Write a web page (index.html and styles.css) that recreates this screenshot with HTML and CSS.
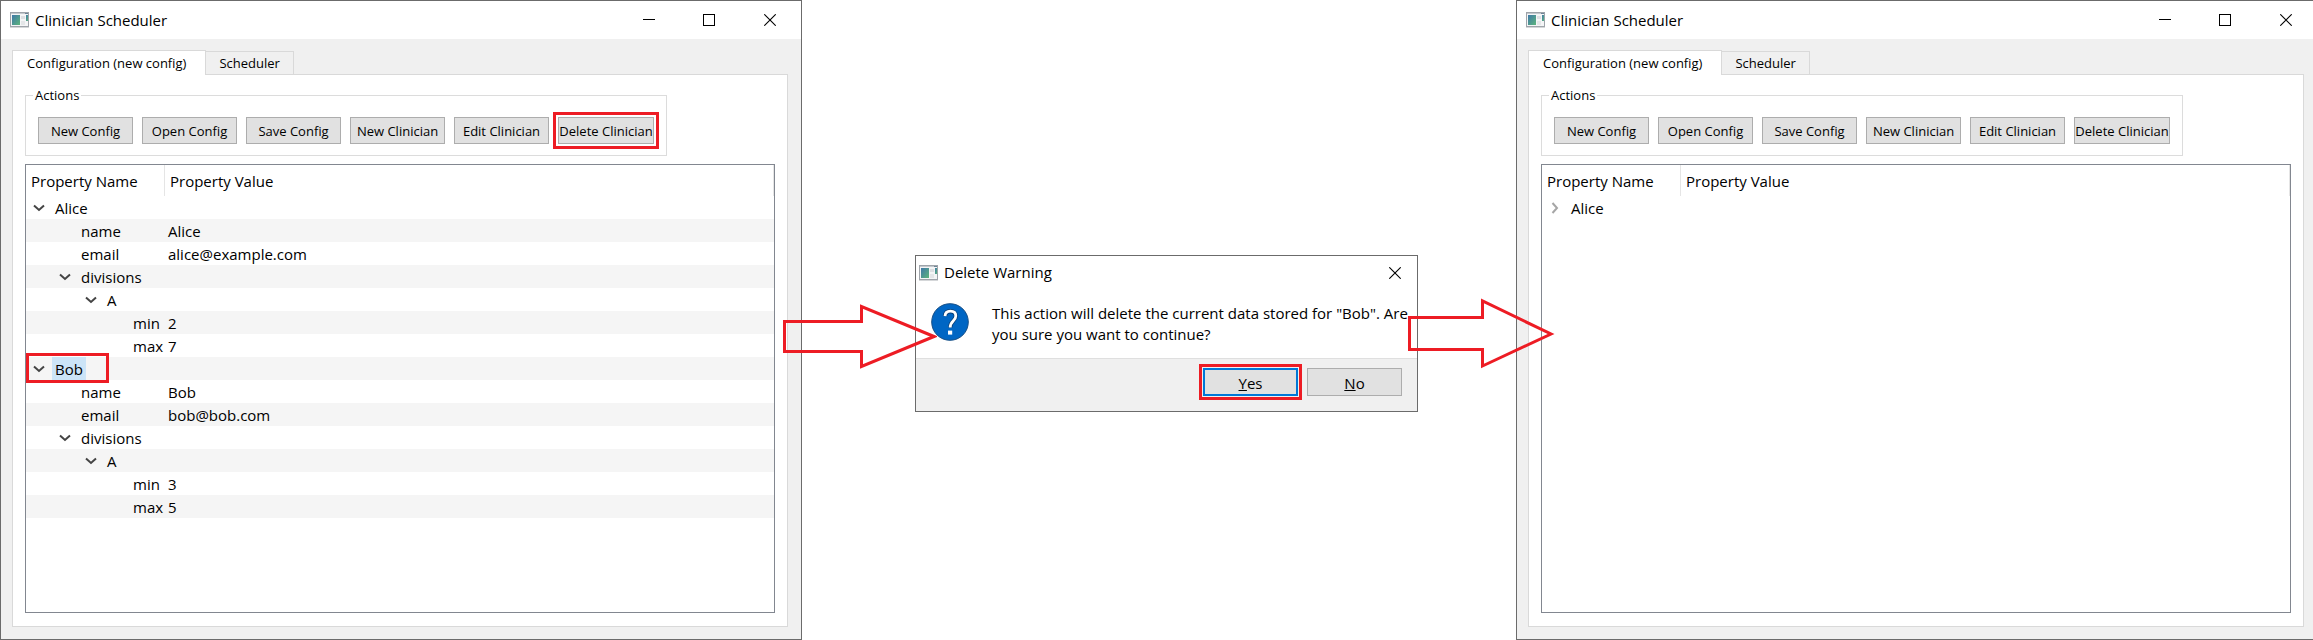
FILE: index.html
```html
<!DOCTYPE html>
<html lang="en">
<head>
<meta charset="utf-8">
<title>Clinician Scheduler</title>
<link rel="stylesheet" href="styles.css">
</head>
<body>
<svg class="defs" aria-hidden="true">
  <defs>
    <linearGradient id="screen" x1="0" y1="0" x2="1" y2="1">
      <stop offset="0" stop-color="#3f78a8"/><stop offset="1" stop-color="#5db57c"/>
    </linearGradient>
    <symbol id="app" viewBox="0 0 19 16">
      <rect x="0.5" y="0.5" width="18" height="14" fill="#f4f5f6" stroke="#9fa4aa"/>
      <path d="M0 15.5H19" stroke="#d5d7d9"/>
      <path d="M1 1.5H15" stroke="#c3c8cd"/>
      <path d="M15 1.5H18" stroke="#6d8597"/>
      <rect x="2" y="3" width="8" height="10" fill="url(#screen)"/>
      <rect x="11" y="4" width="4" height="3" fill="#dddfe2"/>
      <rect x="11" y="9" width="4" height="4" fill="#e4e6e8"/>
      <rect x="16" y="3" width="2" height="6" fill="url(#screen)"/>
    </symbol>
    <symbol id="min" viewBox="0 0 12 12"><path d="M0 5.5H12" stroke="#000"/></symbol>
    <symbol id="max" viewBox="0 0 12 12"><rect x="0.5" y="0.5" width="11" height="11" fill="none" stroke="#000"/></symbol>
    <symbol id="close" viewBox="0 0 12 12"><path d="M0.3 0.3L11.7 11.7M11.7 0.3L0.3 11.7" stroke="#000" stroke-width="1.1"/></symbol>
    <symbol id="open" viewBox="0 0 12 12"><path d="M1 3.5L6 8L11 3.5" fill="none" stroke="#444" stroke-width="2"/></symbol>
    <symbol id="shut" viewBox="0 0 12 12"><path d="M3.5 1L8 6L3.5 11" fill="none" stroke="#a6a6a6" stroke-width="2"/></symbol>
  </defs>
</svg>
<main class="stage">
  <section class="window">
    <header class="titlebar">
      <svg class="app-icon"><use href="#app"/></svg>
      <h1 class="title">Clinician Scheduler</h1>
      <button class="caption" aria-label="Minimize"><svg><use href="#min"/></svg></button>
      <button class="caption" aria-label="Maximize"><svg><use href="#max"/></svg></button>
      <button class="caption" aria-label="Close"><svg><use href="#close"/></svg></button>
    </header>
    <div class="client">
      <div class="tabs" role="tablist">
        <button class="tab active" role="tab" aria-selected="true">Configuration (new config)</button>
        <button class="tab" role="tab" aria-selected="false">Scheduler</button>
      </div>
      <div class="panel">
        <fieldset class="actions">
          <legend>Actions</legend>
          <button class="btn">New Config</button>
          <button class="btn">Open Config</button>
          <button class="btn">Save Config</button>
          <button class="btn">New Clinician</button>
          <button class="btn">Edit Clinician</button>
          <button class="btn marked">Delete Clinician</button>
        </fieldset>
        <div class="tree">
          <table>
            <thead><tr><th class="name-col">Property Name</th><th>Property Value</th></tr></thead>
            <tbody>
              <tr><td><div class="node l0"><svg><use href="#open"/></svg><span>Alice</span></div></td><td></td></tr>
              <tr><td><div class="node l2"><span>name</span></div></td><td>Alice</td></tr>
              <tr><td><div class="node l2"><span>email</span></div></td><td>alice@example.com</td></tr>
              <tr><td><div class="node l1"><svg><use href="#open"/></svg><span>divisions</span></div></td><td></td></tr>
              <tr><td><div class="node l2"><svg><use href="#open"/></svg><span>A</span></div></td><td></td></tr>
              <tr><td><div class="node l4"><span>min</span></div></td><td>2</td></tr>
              <tr><td><div class="node l4"><span>max</span></div></td><td>7</td></tr>
              <tr><td><div class="node l0 picked"><svg><use href="#open"/></svg><span>Bob</span></div></td><td></td></tr>
              <tr><td><div class="node l2"><span>name</span></div></td><td>Bob</td></tr>
              <tr><td><div class="node l2"><span>email</span></div></td><td>bob@bob.com</td></tr>
              <tr><td><div class="node l1"><svg><use href="#open"/></svg><span>divisions</span></div></td><td></td></tr>
              <tr><td><div class="node l2"><svg><use href="#open"/></svg><span>A</span></div></td><td></td></tr>
              <tr><td><div class="node l4"><span>min</span></div></td><td>3</td></tr>
              <tr><td><div class="node l4"><span>max</span></div></td><td>5</td></tr>
            </tbody>
          </table>
        </div>
      </div>
    </div>
  </section>

  <section class="between">
    <div class="dialog" role="dialog" aria-labelledby="dialog-title">
      <header class="dialog-bar">
        <svg class="app-icon"><use href="#app"/></svg>
        <h2 class="title" id="dialog-title">Delete Warning</h2>
        <button class="caption" aria-label="Close"><svg><use href="#close"/></svg></button>
      </header>
      <div class="message">
        <svg class="question" viewBox="0 0 38 38" aria-hidden="true">
          <circle cx="19" cy="19" r="18.3" fill="#0066c4" stroke="#174f86"/>
          <path d="M14 13.2C14.2 9.8 16.3 8.2 19.4 8.2C22.8 8.2 24.8 10.2 24.8 13C24.8 18 19.2 17.6 19.2 24.6" fill="none" stroke="#0a3f75" stroke-width="4.4"/>
          <path d="M14 13.2C14.2 9.8 16.3 8.2 19.4 8.2C22.8 8.2 24.8 10.2 24.8 13C24.8 18 19.2 17.6 19.2 24.6" fill="none" stroke="#fff" stroke-width="2.8"/>
          <rect x="17" y="27.6" width="4.2" height="4" fill="#fff"/>
        </svg>
        <p>This action will delete the current data stored for "Bob". Are you sure you want to continue?</p>
      </div>
      <footer class="choices">
        <button class="btn choice default marked"><u>Y</u>es</button>
        <button class="btn choice"><u>N</u>o</button>
      </footer>
    </div>
    <svg class="arrow first" viewBox="0 0 154 66" aria-hidden="true"><path d="M1.5 17.5H78.5V2.5L151 32.5L78.5 62.5V47.5H1.5Z"/></svg>
    <svg class="arrow second" viewBox="0 0 147 72" aria-hidden="true"><path d="M1.5 19.5H74.5V3L143 36L74.5 68V51.5H1.5Z"/></svg>
  </section>

  <section class="window cut">
    <header class="titlebar">
      <svg class="app-icon"><use href="#app"/></svg>
      <h1 class="title">Clinician Scheduler</h1>
      <button class="caption" aria-label="Minimize"><svg><use href="#min"/></svg></button>
      <button class="caption" aria-label="Maximize"><svg><use href="#max"/></svg></button>
      <button class="caption" aria-label="Close"><svg><use href="#close"/></svg></button>
    </header>
    <div class="client">
      <div class="tabs" role="tablist">
        <button class="tab active" role="tab" aria-selected="true">Configuration (new config)</button>
        <button class="tab" role="tab" aria-selected="false">Scheduler</button>
      </div>
      <div class="panel">
        <fieldset class="actions">
          <legend>Actions</legend>
          <button class="btn">New Config</button>
          <button class="btn">Open Config</button>
          <button class="btn">Save Config</button>
          <button class="btn">New Clinician</button>
          <button class="btn">Edit Clinician</button>
          <button class="btn">Delete Clinician</button>
        </fieldset>
        <div class="tree">
          <table>
            <thead><tr><th class="name-col">Property Name</th><th>Property Value</th></tr></thead>
            <tbody>
              <tr><td><div class="node l0"><svg><use href="#shut"/></svg><span>Alice</span></div></td><td></td></tr>
            </tbody>
          </table>
        </div>
      </div>
    </div>
  </section>
</main>
</body>
</html>
```
FILE: styles.css
```css
*, *::after { box-sizing: border-box; }
body {
  margin: 0;
  background: #fff;
  color: #000;
  font: 15px/21px "Open Sans", "Noto Sans", sans-serif;
}
button { font: inherit; color: inherit; padding: 0; margin: 0; border: 0; background: none; }
svg { display: block; flex: none; }
.defs { position: absolute; width: 0; height: 0; }

.stage {
  display: grid;
  grid-template-columns: 802fr 714fr 797fr;
  min-height: 100vh;
}

/* Application window */
.window {
  display: flex;
  flex-direction: column;
  min-width: 0;
  border: 1px solid #6b6b6b;
  background: #f0f0f0;
}
.window.cut { border-right: 0; }
.titlebar, .dialog-bar {
  display: flex;
  align-items: center;
  background: #fff;
  padding-left: 9px;
}
.titlebar { height: 38px; padding-right: 1px; }
.app-icon { width: 19px; height: 16px; }
.title { flex: 1; margin: 0 0 0 6px; font-size: 15px; font-weight: 400; }
.caption { display: grid; place-items: center; width: 61px; height: 38px; }
.caption svg { width: 12px; height: 12px; }
.titlebar .caption:nth-of-type(2) { width: 60px; }
.cut .caption:last-child { width: 57px; padding-left: 5px; }

.client {
  flex: 1;
  display: flex;
  flex-direction: column;
  padding: 11px 13px 12px 11px;
}
.cut .client { padding-right: 9px; }
.tabs { display: flex; align-items: flex-end; font-size: 13px; }
.tab {
  height: 23px;
  padding: 1px 13px 0;
  border: 1px solid #d9d9d9;
  border-left: 0;
  border-bottom: 0;
  background: #f0f0f0;
  line-height: 21px;
}
.tab.active {
  height: 25px;
  margin-bottom: -1px;
  padding: 0 19px 0 14px;
  border-left: 1px solid #d9d9d9;
  background: #fff;
  position: relative;
}
.panel {
  flex: 1;
  display: flex;
  flex-direction: column;
  gap: 8px;
  padding: 11px 12px 13px;
  border: 1px solid #d9d9d9;
  background: #fff;
}
.actions {
  display: flex;
  gap: 9px;
  width: fit-content;
  margin: 0;
  padding: 13px 12px 11px;
  border: 1px solid #dcdcdc;
  font-size: 13px;
}
.actions legend { margin-left: -5px; padding: 0 2px; line-height: 18px; }
.btn {
  position: relative;
  width: 95px;
  height: 27px;
  padding-top: 1px;
  border: 1px solid #adadad;
  background: #e1e1e1;
  white-space: nowrap;
}
.actions .btn:last-child { width: 96px; }
.marked::after {
  content: "";
  position: absolute;
  inset: -6px;
  border: 3px solid #ed1c24;
}

/* Property tree */
.tree { flex: 1; border: 1px solid #828790; }
.tree table { width: 100%; border-collapse: separate; border-spacing: 0; table-layout: fixed; }
.tree th { height: 31px; padding: 2px 5px 0; text-align: left; font-weight: 400; border-right: 1px solid #e5e5e5; }
.tree .name-col { width: 139px; }
.tree td { height: 23px; padding: 2px 0 0 3px; }
.tree td:first-child { padding: 0; }
.tree tbody tr:nth-child(even) { background: #f5f5f5; }
.node { position: relative; display: flex; align-items: center; height: 23px; }
.node svg { width: 12px; height: 12px; margin-right: 7px; }
.node span { padding: 2px 3px 0; line-height: 21px; }
.l0 { padding-left: 7px; }
.l1 { padding-left: 33px; }
.l2 { padding-left: 52px; }
.l2:has(svg) { padding-left: 59px; }
.l4 { padding-left: 104px; }
.picked span { background: #cce4f7; }
.picked::after {
  content: "";
  position: absolute;
  left: 0;
  top: -4px;
  width: 83px;
  height: 30px;
  border: 3px solid #ed1c24;
}

/* Confirmation dialog */
.between {
  position: relative;
  display: flex;
  align-items: center;
  justify-content: center;
  padding: 27px 0 0 15px;
}
.dialog { width: 503px; border: 1px solid #6b6b6b; background: #f0f0f0; }
.dialog-bar { height: 33px; padding-left: 3px; }
.dialog-bar .caption { width: 44px; height: 33px; }
.message {
  display: flex;
  gap: 23px;
  height: 69px;
  padding: 14px 0 0 15px;
  background: #fff;
}
.message p { margin: 0; }
.question { width: 38px; height: 38px; }
.choices {
  display: flex;
  justify-content: flex-end;
  gap: 9px;
  padding: 9px 15px 15px;
  border-top: 1px solid #dfdfdf;
}
.choice { height: 28px; padding-top: 2px; }
.default { border: 2px solid #0078d7; }

.arrow { position: absolute; fill: none; stroke: #ed1c24; stroke-width: 3; }
.first { left: -19px; top: calc(50% - 16px); width: 154px; height: 66px; }
.second { right: -39px; top: calc(50% - 22px); width: 147px; height: 72px; }
```
